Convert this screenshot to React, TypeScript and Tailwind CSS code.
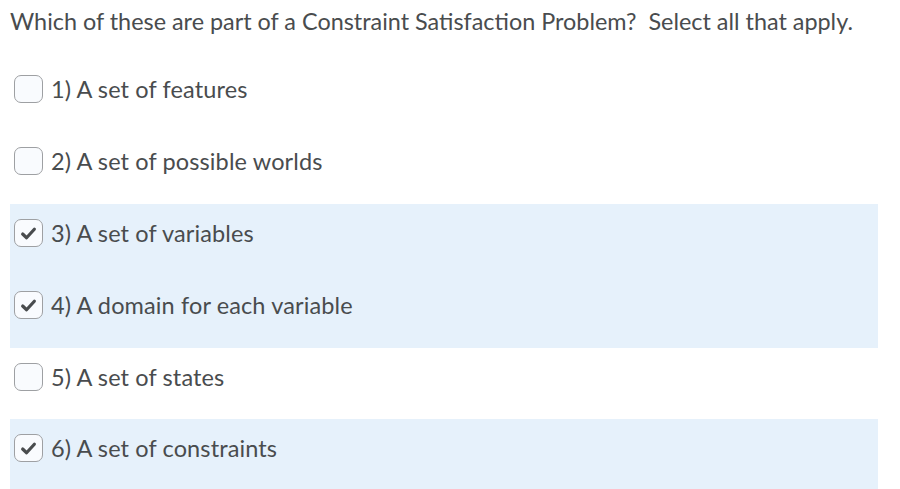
import React from "react";

const options = [
  { label: "1) A set of features", checked: false, h: "h-[72px]" },
  { label: "2) A set of possible worlds", checked: false, h: "h-[72px]" },
  { label: "3) A set of variables", checked: true, h: "h-[72px]" },
  { label: "4) A domain for each variable", checked: true, h: "h-[72px]" },
  { label: "5) A set of states", checked: false, h: "h-[71px]" },
  { label: "6) A set of constraints", checked: true, h: "h-[72px]" },
];

function Box({ checked }: { checked: boolean }) {
  return (
    <div className="mt-[15px] ml-[4px] w-[29px] h-[28px] shrink-0 rounded-[7px] border border-[#9ea0a3] bg-[#f9fbfe] flex items-center justify-center">
      {checked && (
        <svg width="17" height="15" viewBox="0 0 16 14">
          <path d="M2.5 7.5 L6.2 11 L13.5 3" fill="none" stroke="#494c4e" strokeWidth="3" strokeLinecap="round" strokeLinejoin="round" />
        </svg>
      )}
    </div>
  );
}

export default function App() {
  return (
    <div className="w-[900px] h-[489px] bg-white overflow-hidden text-[#494c4e]" style={{ fontFamily: "Lato, 'Noto Sans', sans-serif" }}>
      <div className="h-[60px] pl-[10px] pt-[3.5px] text-[23.4px] leading-normal whitespace-nowrap">
        Which of these are part of a Constraint Satisfaction Problem?{"\u00a0 "}Select all that apply.
      </div>
      <div className="flex flex-col">
        {options.map((o) => (
          <div key={o.label} className={`${o.h} ml-[10px] w-[868px] flex items-start ${o.checked ? "bg-[#e6f1fb]" : ""}`}>
            <Box checked={o.checked} />
            <div className="ml-[8px] mt-[15px] text-[23.5px] leading-[28px] tracking-[0.12px] whitespace-nowrap">{o.label}</div>
          </div>
        ))}
      </div>
    </div>
  );
}
